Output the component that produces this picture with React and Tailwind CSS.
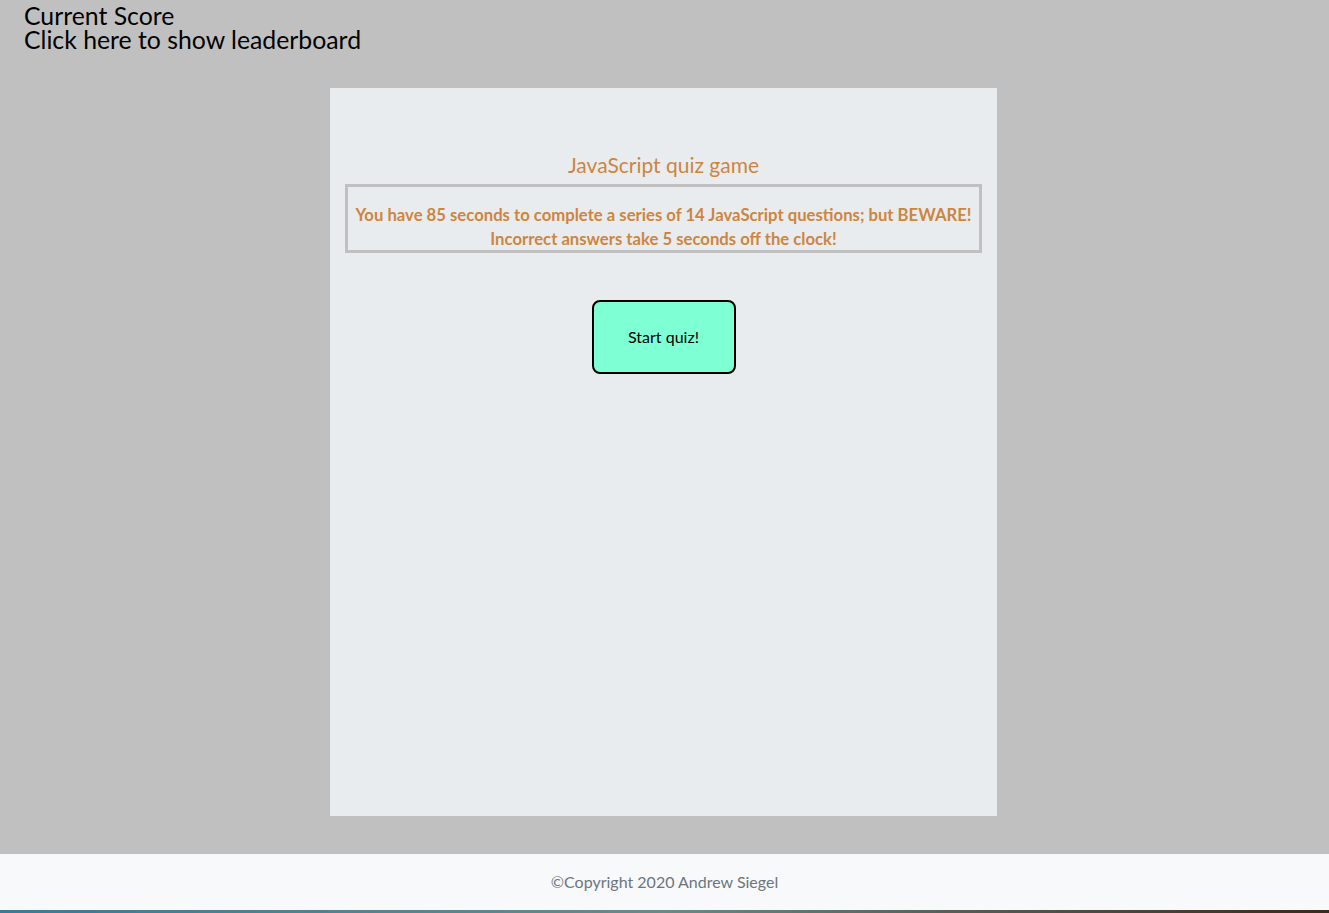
export default function App() {
  return (
    <div className="flex min-h-[913px] flex-col bg-[#c0c0c0] font-['Lato',sans-serif]">
      <header className="px-6 pt-[4px] text-[24.8px] leading-[24px] text-black">
        <p>Current Score</p>
        <p>Click here to show leaderboard</p>
      </header>

      <main className="flex justify-center pt-[36px] pr-[2px] pb-[38px]">
        <div className="flex h-[728px] w-[667px] flex-col items-center bg-[#e9ecef] px-[15px] pt-[63px]">
          <h1 className="text-[21px] leading-[27px] text-[#cd853f]">JavaScript quiz game</h1>
          <div className="mt-[6px] h-[69px] w-full border-[3px] border-[#c0c0c0] pt-[16px] text-center text-[16.7px] font-bold leading-[24px] text-[#cd853f]">
            <p>You have 85 seconds to complete a series of 14 JavaScript questions; but BEWARE!</p>
            <p>Incorrect answers take 5 seconds off the clock!</p>
          </div>
          <button className="mt-[47px] h-[74px] w-[144px] rounded-[8px] border-2 border-black bg-[#7fffd4] text-[16px] text-black">
            Start quiz!
          </button>
        </div>
      </main>

      <footer className="flex h-[56px] items-center justify-center bg-[#f8f9fa] text-[16px] text-[#6c757d]">
        ©Copyright 2020 Andrew Siegel
      </footer>
      <div className="h-[3px] bg-gradient-to-r from-[#3b7a96] via-[#6a8a86] to-[#3a2a1e]" />
    </div>
  );
}
